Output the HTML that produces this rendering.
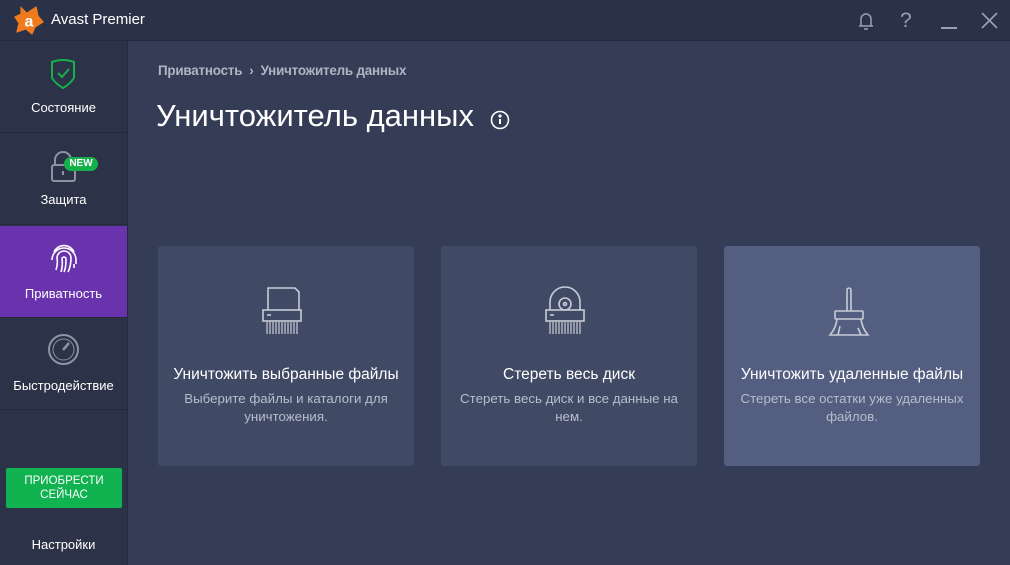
<!DOCTYPE html>
<html><head><meta charset="utf-8"><style>
*{margin:0;padding:0;box-sizing:border-box}
body{width:1010px;height:565px;overflow:hidden;background:#353d56;font-family:"Liberation Sans",sans-serif;position:relative;color:#fff}
.top{position:absolute;left:0;top:0;width:1010px;height:41px;background:#2b3247;border-bottom:1px solid #252b3d}
.side{position:absolute;left:0;top:41px;width:128px;height:524px;background:#2c3348;border-right:1px solid #252b3d}
.item{position:absolute;left:0;width:127px;height:92px;border-bottom:1px solid #242a3b;text-align:center;font-size:13px}
.item .lbl{position:absolute;left:0;right:0;top:60px}
.card{position:absolute;top:246px;width:256px;height:220px;background:#414a65;border-radius:3px;text-align:center}
.card h3{position:absolute;left:0;right:0;top:120px;font-size:15.5px;font-weight:normal;color:#fff}
.card p{position:absolute;left:8px;right:8px;top:144px;font-size:13.3px;line-height:18px;color:#b8bdcc}
.card svg{position:absolute;left:104px;top:40px}
</style></head><body>
<div class="top">
<svg style="position:absolute;left:13px;top:4px" width="32" height="32" viewBox="0 0 30 30"><path d="M7 2 L13 8 L22 2 L24 11 L29 17 L21 22 L18 29 L12 24 L3 27 L5 18 L1 12 L7 9Z" fill="#f07b1f"/><text x="15" y="21" text-anchor="middle" font-size="15" font-weight="bold" fill="#fff" font-family="Liberation Sans">a</text></svg>
<div style="position:absolute;left:51px;top:11px;font-size:15px">Avast Premier</div>
<svg style="position:absolute;left:857px;top:11px" width="18" height="20" viewBox="0 0 18 20" fill="none" stroke="#9ba1b2" stroke-width="1.5"><path d="M4 15 V8 a5 5 0 0 1 10 0 V15 M2 15 H16 M7 18 H11"/></svg>
<div style="position:absolute;left:900px;top:9px;font-size:21px;color:#9ba1b2">?</div>
<div style="position:absolute;left:941px;top:27px;width:16px;height:2px;background:#9ba1b2"></div>
<svg style="position:absolute;left:981px;top:12px" width="17" height="17" stroke="#9ba1b2" stroke-width="1.6"><path d="M1 1 L16 16 M16 1 L1 16"/></svg>
</div>
<div class="side">
<div class="item" style="top:0">
<svg style="position:absolute;left:50px;top:17px" width="26" height="32" viewBox="0 0 26 32" fill="none" stroke="#16b04a" stroke-width="2"><path d="M2 4 Q13 0 24 4 V20 Q20 26 13 30 Q6 26 2 20Z"/><path d="M8 15 L12 19 L19 11"/></svg>
<div class="lbl" style="top:59px">Состояние</div></div>
<div class="item" style="top:92px">
<svg style="position:absolute;left:50px;top:17px" width="28" height="33" viewBox="0 0 28 33" fill="none" stroke="#8d93a3" stroke-width="2"><path d="M5 15 V10 a8 8 0 0 1 16 0"/><rect x="2" y="15" width="23" height="16" rx="2"/><path d="M13 21 V25"/></svg>
<div style="position:absolute;left:64px;top:24px;width:34px;height:14px;border-radius:7px;background:#16b04a;font-size:10px;font-weight:bold;line-height:14px;text-align:center">NEW</div>
<div class="lbl" style="top:59px">Защита</div></div>
<div class="item" style="top:185px;background:#6833ad;height:92px">
<svg style="position:absolute;left:50px;top:16px" width="28" height="32" viewBox="0 0 28 32" fill="none" stroke="#fff" stroke-width="1.6"><path d="M4 10 a11 11 0 0 1 20 0 M2 18 a12 12 0 0 1 24 0 V22 M6 28 Q8 22 7 16 a7 7 0 0 1 14 0 Q21 24 18 30 M11 30 Q13 24 12 17 a2 2 0 0 1 4 0 Q16 26 14 30 M24 26 Q24 24 24 22"/></svg>
<div class="lbl">Приватность</div></div>
<div class="item" style="top:277px">
<svg style="position:absolute;left:47px;top:15px" width="33" height="33" viewBox="0 0 33 33" fill="none" stroke="#8d93a3" stroke-width="2"><circle cx="16.5" cy="16.5" r="14.5"/><circle cx="16.5" cy="16.5" r="10.5" stroke-width="1"/><path d="M16 17 L22 10" stroke-width="2.5"/></svg>
<div class="lbl">Быстродействие</div></div>
<div style="position:absolute;left:6px;top:427px;width:116px;height:40px;background:#10b350;border-radius:2px;font-size:11.5px;line-height:14px;text-align:center;padding-top:6px">ПРИОБРЕСТИ<br>СЕЙЧАС</div>
<div style="position:absolute;left:0;width:127px;top:496px;text-align:center;font-size:13px">Настройки</div>
</div>
<div style="position:absolute;left:158px;top:63px;font-size:13.4px;color:#b0b5c4;font-weight:bold;letter-spacing:-0.2px">Приватность&nbsp; ›&nbsp; Уничтожитель данных</div>
<div style="position:absolute;left:156px;top:98px;font-size:31px;font-weight:300">Уничтожитель данных</div>
<svg style="position:absolute;left:490px;top:110px" width="20" height="20" viewBox="0 0 20 20" fill="none" stroke="#fff" stroke-width="1.6"><circle cx="10" cy="10" r="8.5"/><path d="M10 9 V14" stroke-width="2"/><circle cx="10" cy="6" r="0.8" fill="#fff"/></svg>

<div class="card" style="left:158px">
<svg width="48" height="52" viewBox="0 0 48 52" fill="none" stroke="#c8ccd6" stroke-width="1.6"><path d="M6 24 V2 H33 L37 6 V24"/><rect x="1" y="24" width="38" height="11"/><path d="M5 29 H9" /><path d="M5 36 V48 M8 36 V48 M11 36 V48 M14 36 V48 M17 36 V48 M20 36 V48 M23 36 V48 M26 36 V48 M29 36 V48 M32 36 V48 M35 36 V48" stroke-width="1.2"/></svg>
<h3>Уничтожить выбранные файлы</h3><p>Выберите файлы и каталоги для уничтожения.</p></div>
<div class="card" style="left:441px">
<svg width="48" height="52" viewBox="0 0 48 52" fill="none" stroke="#c8ccd6" stroke-width="1.6"><path d="M5 24 V16 a15 15 0 0 1 30 0 V24"/><circle cx="20" cy="18" r="6"/><circle cx="20" cy="18" r="1.5"/><rect x="1" y="24" width="38" height="11"/><path d="M5 29 H9"/><path d="M5 36 V48 M8 36 V48 M11 36 V48 M14 36 V48 M17 36 V48 M20 36 V48 M23 36 V48 M26 36 V48 M29 36 V48 M32 36 V48 M35 36 V48" stroke-width="1.2"/></svg>
<h3>Стереть весь диск</h3><p>Стереть весь диск и все данные на нем.</p></div>
<div class="card" style="left:724px;background:#535e80">
<svg width="48" height="52" viewBox="0 0 48 52" fill="none" stroke="#c8ccd6" stroke-width="1.6"><path d="M19 25 V4 a2 2 0 0 1 4 0 V25"/><rect x="7" y="25" width="28" height="8" rx="1"/><path d="M9 33 Q8 42 2 49 H40 Q34 42 33 33 M12 40 L10 49 M30 42 L33 49"/></svg>
<h3>Уничтожить удаленные файлы</h3><p>Стереть все остатки уже удаленных файлов.</p></div>
</body></html>
